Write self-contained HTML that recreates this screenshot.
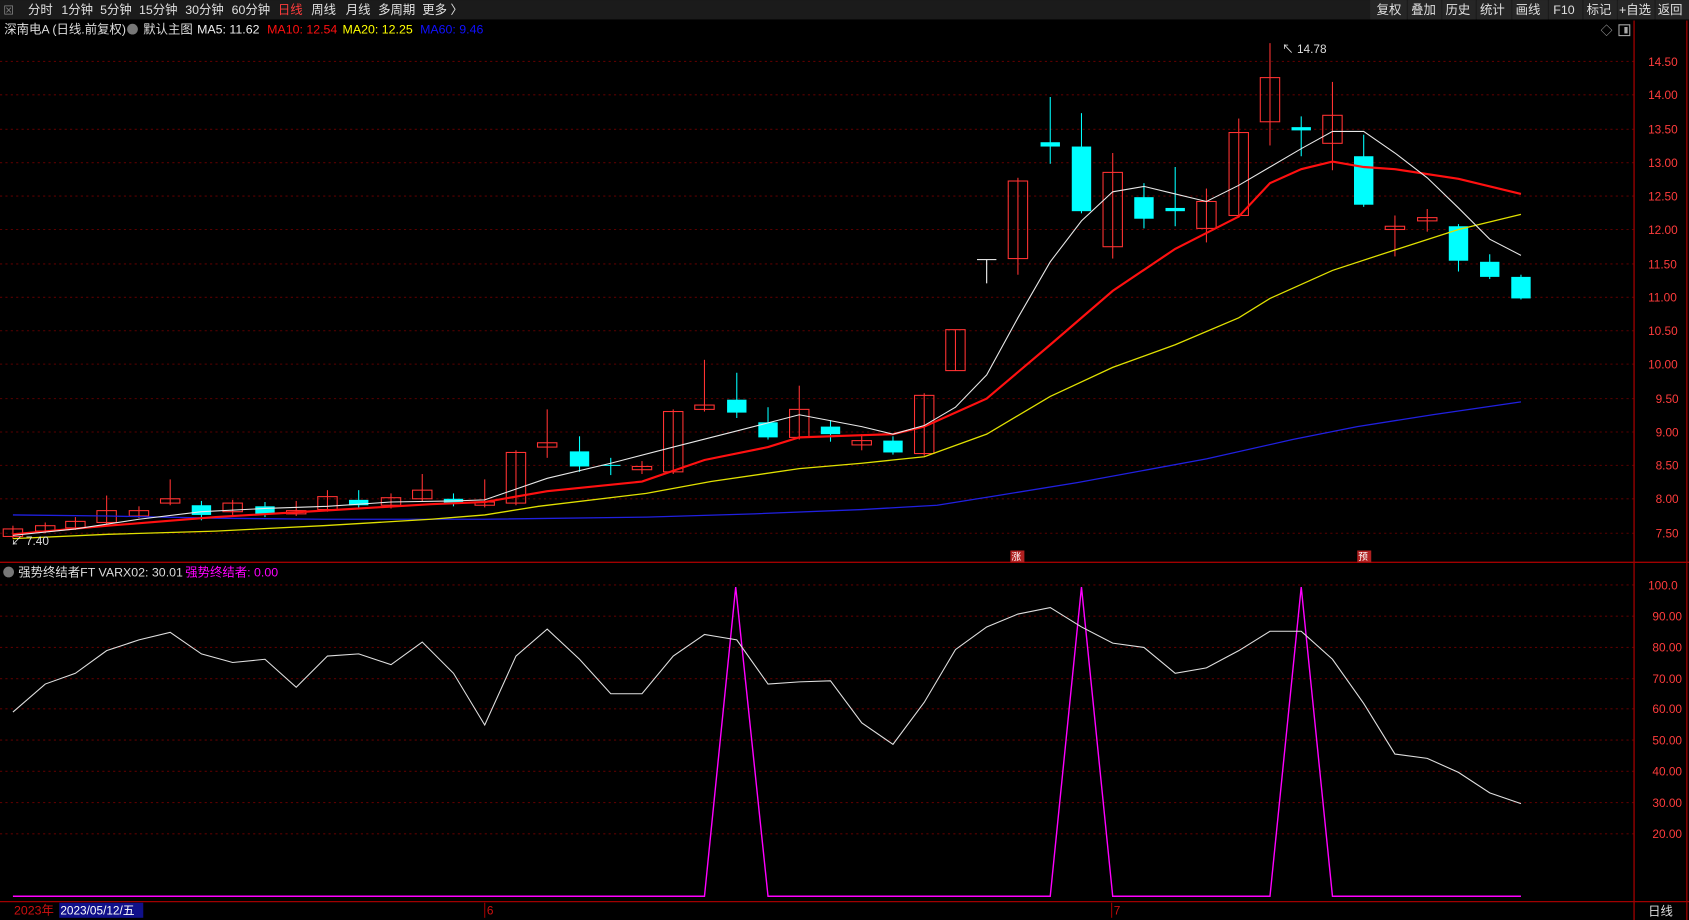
<!DOCTYPE html>
<html><head><meta charset="utf-8"><style>
html,body{margin:0;padding:0;background:#000;overflow:hidden}
svg{display:block}
text{font-family:"Liberation Sans","Noto Sans CJK SC",sans-serif}
</style></head><body>
<svg width="1689" height="920" viewBox="0 0 1568 854" xmlns="http://www.w3.org/2000/svg">
<rect width="1568" height="854" fill="#000"/>
<rect x="0" y="0" width="1568" height="18" fill="#1b1b1b"/>
<g font-size="11.5" fill="#e0e0e0">
<text x="3" y="13" fill="#888" font-size="10">⊠</text>
<text x="26" y="13">分时</text><text x="57" y="13">1分钟</text><text x="93" y="13">5分钟</text><text x="129" y="13">15分钟</text><text x="172" y="13">30分钟</text><text x="215" y="13">60分钟</text>
<text x="258" y="13" fill="#ff3c3c">日线</text><text x="289" y="13">周线</text><text x="321" y="13">月线</text><text x="351" y="13">多周期</text><text x="392" y="13">更多 〉</text>
</g>
<g font-size="11.5" fill="#e0e0e0">
<rect x="1272" y="0" width="34" height="18" fill="#262626"/><text x="1278" y="13">复权</text>
<rect x="1307" y="0" width="31" height="18" fill="#262626"/><text x="1310" y="13">叠加</text>
<rect x="1339" y="0" width="31" height="18" fill="#262626"/><text x="1342" y="13">历史</text>
<rect x="1371" y="0" width="32" height="18" fill="#262626"/><text x="1374" y="13">统计</text>
<rect x="1404" y="0" width="33" height="18" fill="#262626"/><text x="1407" y="13">画线</text>
<rect x="1438" y="0" width="31" height="18" fill="#262626"/><text x="1442" y="13">F10</text>
<rect x="1470" y="0" width="31" height="18" fill="#262626"/><text x="1473" y="13">标记</text>
<rect x="1502" y="0" width="34" height="18" fill="#262626"/><text x="1503" y="13">+自选</text>
<rect x="1537" y="0" width="31" height="18" fill="#262626"/><text x="1539" y="13">返回</text>
</g>
<g font-size="11.5">
<text x="4" y="31" fill="#ddd">深南电A (日线.前复权)</text>
<circle cx="123" cy="27" r="5" fill="#777"/>
<text x="133" y="31" fill="#ddd">默认主图</text>
<text x="183" y="31" fill="#eee">MA5: 11.62</text>
<text x="248" y="31" fill="#ff1010">MA10: 12.54</text>
<text x="318" y="31" fill="#ffff00">MA20: 12.25</text>
<text x="390" y="31" fill="#1010ff">MA60: 9.46</text>
</g>
<text x="1486" y="32" fill="#aaa" font-size="11">◇</text>
<rect x="1503" y="23" width="10" height="10" fill="none" stroke="#aaa"/><rect x="1508" y="25" width="3" height="6" fill="#aaa"/>
<g stroke="#5a0000" stroke-dasharray="2,3" stroke-width="1">
<line x1="0" x2="1517" y1="57" y2="57"/><line x1="0" x2="1517" y1="88" y2="88"/><line x1="0" x2="1517" y1="120" y2="120"/><line x1="0" x2="1517" y1="151" y2="151"/><line x1="0" x2="1517" y1="182" y2="182"/><line x1="0" x2="1517" y1="213" y2="213"/><line x1="0" x2="1517" y1="245" y2="245"/><line x1="0" x2="1517" y1="276" y2="276"/><line x1="0" x2="1517" y1="307" y2="307"/><line x1="0" x2="1517" y1="338" y2="338"/><line x1="0" x2="1517" y1="370" y2="370"/><line x1="0" x2="1517" y1="401" y2="401"/><line x1="0" x2="1517" y1="432" y2="432"/><line x1="0" x2="1517" y1="463" y2="463"/><line x1="0" x2="1517" y1="495" y2="495"/>
<line x1="0" x2="1517" y1="543" y2="543"/><line x1="0" x2="1517" y1="572" y2="572"/><line x1="0" x2="1517" y1="601" y2="601"/><line x1="0" x2="1517" y1="630" y2="630"/><line x1="0" x2="1517" y1="658" y2="658"/><line x1="0" x2="1517" y1="687" y2="687"/><line x1="0" x2="1517" y1="716" y2="716"/><line x1="0" x2="1517" y1="745" y2="745"/><line x1="0" x2="1517" y1="774" y2="774"/>
</g>
<g stroke="#a00000" stroke-width="1.2">
<line x1="1517" y1="19" x2="1517" y2="854"/>
<line x1="0" y1="522" x2="1568" y2="522"/>
<line x1="0" y1="837" x2="1568" y2="837"/>
<line x1="1566" y1="19" x2="1566" y2="854"/>
</g>
<g font-size="11" fill="#ff3c3c">
<text x="1530" y="61">14.50</text><text x="1530" y="92">14.00</text><text x="1530" y="124">13.50</text><text x="1530" y="155">13.00</text><text x="1530" y="186">12.50</text><text x="1530" y="217">12.00</text><text x="1530" y="249">11.50</text><text x="1530" y="280">11.00</text><text x="1530" y="311">10.50</text><text x="1530" y="342">10.00</text><text x="1537" y="374">9.50</text><text x="1537" y="405">9.00</text><text x="1537" y="436">8.50</text><text x="1537" y="467">8.00</text><text x="1537" y="499">7.50</text>
<text x="1530" y="547">100.0</text><text x="1534" y="576">90.00</text><text x="1534" y="605">80.00</text><text x="1534" y="634">70.00</text><text x="1534" y="662">60.00</text><text x="1534" y="691">50.00</text><text x="1534" y="720">40.00</text><text x="1534" y="749">30.00</text><text x="1534" y="778">20.00</text>
</g>
<g stroke="#ff3232" fill="none" stroke-width="1">
<line x1="12" y1="488" x2="12" y2="500"/><rect x="3" y="491" width="18" height="7"/>
<line x1="42" y1="485" x2="42" y2="495"/><rect x="33" y="488" width="18" height="5"/>
<line x1="70" y1="480" x2="70" y2="492"/><rect x="61" y="484" width="18" height="6"/>
<line x1="99" y1="460" x2="99" y2="487"/><rect x="90" y="474" width="18" height="11"/>
<line x1="129" y1="470" x2="129" y2="481"/><rect x="120" y="474" width="18" height="5"/>
<line x1="158" y1="445" x2="158" y2="469"/><rect x="149" y="463" width="18" height="4"/>
<line x1="216" y1="464" x2="216" y2="478"/><rect x="207" y="467" width="18" height="8"/>
<line x1="275" y1="465" x2="275" y2="479"/><rect x="266" y="474" width="18" height="3"/>
<line x1="304" y1="455" x2="304" y2="475"/><rect x="295" y="461" width="18" height="12"/>
<line x1="363" y1="458" x2="363" y2="472"/><rect x="354" y="462" width="18" height="7"/>
<line x1="392" y1="440" x2="392" y2="466"/><rect x="383" y="455" width="18" height="8"/>
<line x1="450" y1="445" x2="450" y2="471"/><rect x="441" y="466" width="18" height="3"/>
<line x1="479" y1="418" x2="479" y2="469"/><rect x="470" y="420" width="18" height="47"/>
<line x1="508" y1="380" x2="508" y2="425"/><rect x="499" y="411" width="18" height="4"/>
<line x1="596" y1="428" x2="596" y2="440"/><rect x="587" y="433" width="18" height="3"/>
<line x1="625" y1="380" x2="625" y2="440"/><rect x="616" y="382" width="18" height="56"/>
<line x1="654" y1="334" x2="654" y2="382"/><rect x="645" y="376" width="18" height="4"/>
<line x1="742" y1="358" x2="742" y2="408"/><rect x="733" y="380" width="18" height="26"/>
<line x1="800" y1="403" x2="800" y2="418"/><rect x="791" y="409" width="18" height="4"/>
<line x1="858" y1="365" x2="858" y2="423"/><rect x="849" y="367" width="18" height="54"/>
<line x1="887" y1="306" x2="887" y2="344"/><rect x="878" y="306" width="18" height="38"/>
<line x1="945" y1="165" x2="945" y2="255"/><rect x="936" y="168" width="18" height="72"/>
<line x1="1033" y1="142" x2="1033" y2="240"/><rect x="1024" y="160" width="18" height="69"/>
<line x1="1120" y1="175" x2="1120" y2="225"/><rect x="1111" y="187" width="18" height="25"/>
<line x1="1150" y1="110" x2="1150" y2="202"/><rect x="1141" y="123" width="18" height="77"/>
<line x1="1179" y1="40" x2="1179" y2="135"/><rect x="1170" y="72" width="18" height="41"/>
<line x1="1237" y1="76" x2="1237" y2="158"/><rect x="1228" y="107" width="18" height="26"/>
<line x1="1295" y1="200" x2="1295" y2="238"/><rect x="1286" y="210" width="18" height="3"/>
<line x1="1325" y1="194" x2="1325" y2="215"/><rect x="1316" y="202" width="18" height="3"/>
</g>
<g fill="#00ffff" stroke="#00ffff">
<line x1="187" y1="465" x2="187" y2="483"/><rect x="178" y="469" width="18" height="9" stroke="none"/>
<line x1="246" y1="466" x2="246" y2="480"/><rect x="237" y="470" width="18" height="7" stroke="none"/>
<line x1="333" y1="455" x2="333" y2="473"/><rect x="324" y="464" width="18" height="5" stroke="none"/>
<line x1="421" y1="458" x2="421" y2="470"/><rect x="412" y="463" width="18" height="4" stroke="none"/>
<line x1="538" y1="405" x2="538" y2="438"/><rect x="529" y="419" width="18" height="14" stroke="none"/>
<line x1="567" y1="425" x2="567" y2="441"/><line x1="558" y1="432" x2="576" y2="432"/>
<line x1="684" y1="346" x2="684" y2="388"/><rect x="675" y="371" width="18" height="12" stroke="none"/>
<line x1="713" y1="378" x2="713" y2="408"/><rect x="704" y="392" width="18" height="14" stroke="none"/>
<line x1="771" y1="390" x2="771" y2="410"/><rect x="762" y="396" width="18" height="7" stroke="none"/>
<line x1="829" y1="405" x2="829" y2="422"/><rect x="820" y="409" width="18" height="11" stroke="none"/>
<line x1="916" y1="241" x2="916" y2="263" stroke="#fff"/><line x1="907" y1="241" x2="925" y2="241" stroke="#fff"/>
<line x1="975" y1="90" x2="975" y2="152"/><rect x="966" y="132" width="18" height="4" stroke="none"/>
<line x1="1004" y1="105" x2="1004" y2="198"/><rect x="995" y="136" width="18" height="60" stroke="none"/>
<line x1="1062" y1="170" x2="1062" y2="212"/><rect x="1053" y="183" width="18" height="20" stroke="none"/>
<line x1="1091" y1="155" x2="1091" y2="210"/><rect x="1082" y="193" width="18" height="3" stroke="none"/>
<line x1="1208" y1="108" x2="1208" y2="145"/><rect x="1199" y="118" width="18" height="3" stroke="none"/>
<line x1="1266" y1="125" x2="1266" y2="192"/><rect x="1257" y="145" width="18" height="45" stroke="none"/>
<line x1="1354" y1="208" x2="1354" y2="252"/><rect x="1345" y="210" width="18" height="32" stroke="none"/>
<line x1="1383" y1="236" x2="1383" y2="259"/><rect x="1374" y="243" width="18" height="14" stroke="none"/>
<line x1="1412" y1="255" x2="1412" y2="278"/><rect x="1403" y="257" width="18" height="20" stroke="none"/>
</g>
<polyline fill="none" stroke="#2020e0" stroke-width="1.2" points="12,478 100,479 200,481 300,482 450,482 600,480 700,477 800,473 870,469 920,461 1000,448 1120,426 1200,408 1260,396 1330,385 1412,373"/>
<polyline fill="none" stroke="#e0e000" stroke-width="1.2" points="12,500 100,496 200,493 300,488 400,482 450,478 500,470 600,458 660,447 742,435 800,430 858,424 916,403 975,368 1033,341 1091,320 1150,295 1179,277 1237,251 1295,232 1354,213 1412,199"/>
<polyline fill="none" stroke="#ff1010" stroke-width="2" points="12,496 100,488 200,480 300,474 400,468 450,466 508,456 596,447 654,427 713,415 742,406 800,404 829,403 858,396 916,370 975,320 1033,270 1091,231 1150,201 1179,170 1208,157 1237,150 1266,155 1295,157 1354,166 1412,180"/>
<polyline fill="none" stroke="#e8e8e8" stroke-width="1" points="12,497 70,491 129,482 187,475 246,472 304,470 363,466 421,465 450,464 508,444 567,430 625,415 684,400 742,385 800,396 829,403 858,395 887,378 916,348 945,295 975,243 1004,205 1033,178 1062,173 1091,180 1120,187 1150,172 1179,155 1208,138 1237,122 1266,122 1295,142 1325,165 1354,193 1383,222 1412,237"/>
<text x="1190" y="49" fill="#ddd" font-size="11">↖ 14.78</text>
<text x="10" y="506" fill="#ddd" font-size="11">↙ 7.40</text>
<rect x="938" y="511" width="13" height="11" fill="#b02020"/><text x="939" y="520" fill="#fff" font-size="9">涨</text>
<rect x="1260" y="511" width="13" height="11" fill="#b02020"/><text x="1261" y="520" fill="#fff" font-size="9">预</text>
<circle cx="8" cy="531" r="5" fill="#777"/>
<text x="17" y="535" fill="#ddd" font-size="11.5">强势终结者FT  VARX02: 30.01</text>
<text x="172" y="535" fill="#ff00ff" font-size="11.5">强势终结者: 0.00</text>
<polyline fill="none" stroke="#ff00ff" stroke-width="1.3" points="12,832 654,832 683,545 713,832 975,832 1004,545 1033,832 1179,832 1208,545 1237,832 1412,832"/>
<polyline fill="none" stroke="#e0e0e0" stroke-width="1" points="12,661 42,635 70,625 99,604 129,594 158,587 187,607 216,615 246,612 275,638 304,609 333,607 363,617 392,596 421,625 450,673 479,609 508,584 538,612 567,644 596,644 625,609 654,589 684,594 713,635 742,633 771,632 800,671 829,691 858,652 887,603 916,582 945,570 975,564 1004,582 1033,597 1062,601 1091,625 1120,620 1150,604 1179,586 1208,586 1237,612 1266,653 1295,700 1325,704 1354,717 1383,736 1412,746"/>
<rect x="0" y="838" width="1516" height="16" fill="#000"/>
<text x="13" y="849" fill="#d01010" font-size="11.5">2023年</text>
<rect x="55" y="838" width="78" height="14" fill="#10108a"/>
<text x="56" y="849" fill="#fff" font-size="11">2023/05/12/五</text>
<line x1="450" y1="838" x2="450" y2="852" stroke="#a00000"/><text x="452" y="849" fill="#d01010" font-size="11">6</text>
<line x1="1032" y1="838" x2="1032" y2="852" stroke="#a00000"/><text x="1034" y="849" fill="#d01010" font-size="11">7</text>
<text x="1530" y="850" fill="#ddd" font-size="11.5">日线</text>
</svg>
</body></html>
